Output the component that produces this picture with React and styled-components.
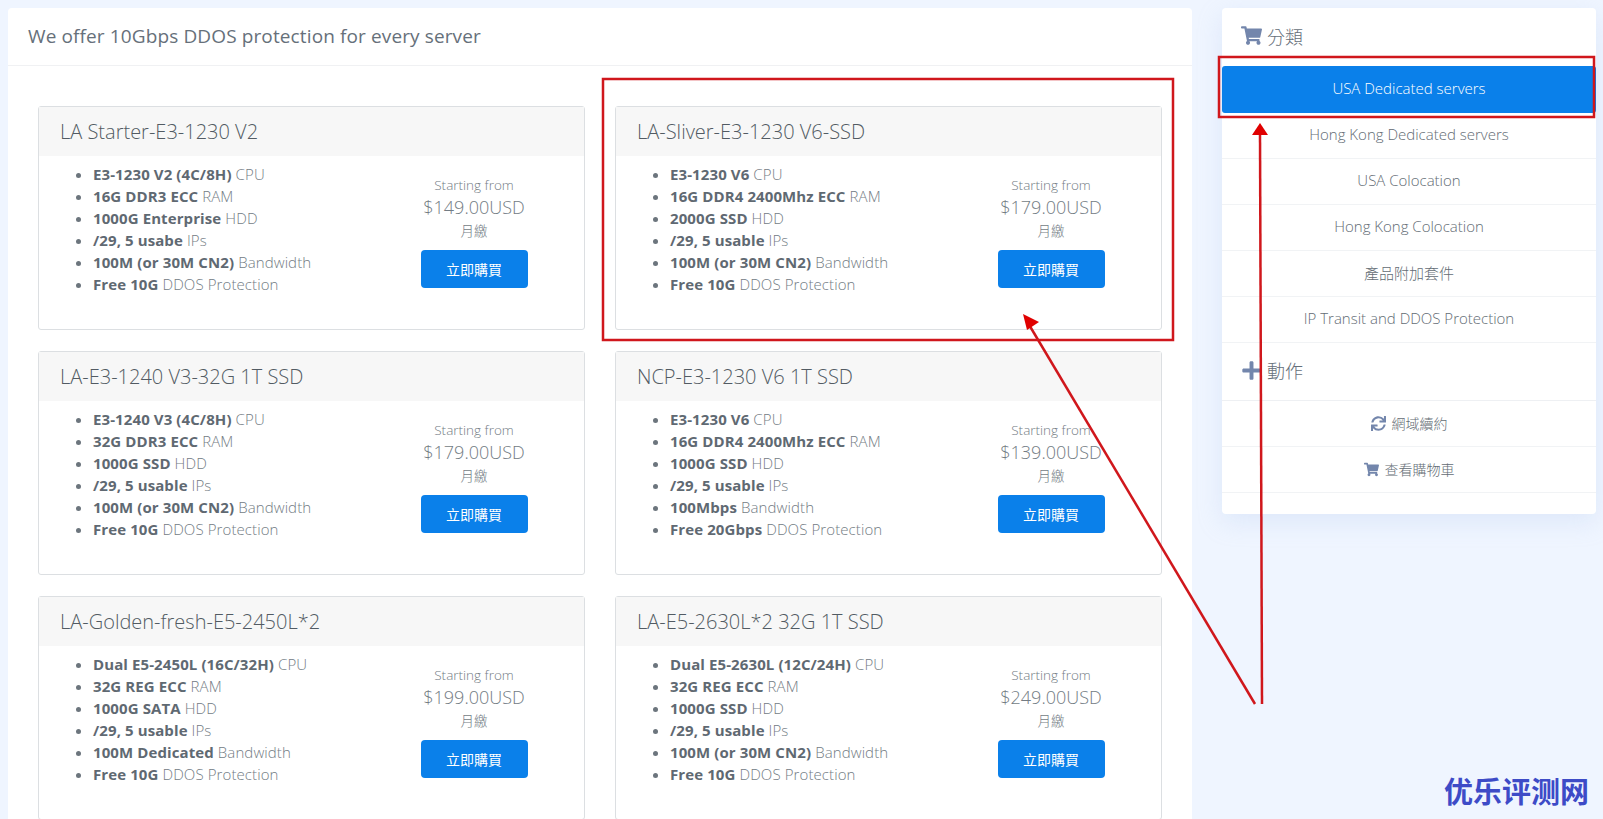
import React from "react";
import styled, { createGlobalStyle } from "styled-components";
import { FaShoppingCart, FaPlus, FaSync } from "react-icons/fa";

const plans = [
  {
    title: "LA Starter-E3-1230 V2",
    price: "$149.00USD",
    specs: [
      ["E3-1230 V2 (4C/8H)", "CPU"],
      ["16G DDR3 ECC", "RAM"],
      ["1000G Enterprise", "HDD"],
      ["/29, 5 usabe", "IPs"],
      ["100M (or 30M CN2)", "Bandwidth"],
      ["Free 10G", "DDOS Protection"],
    ],
  },
  {
    title: "LA-Sliver-E3-1230 V6-SSD",
    price: "$179.00USD",
    specs: [
      ["E3-1230 V6", "CPU"],
      ["16G DDR4 2400Mhz ECC", "RAM"],
      ["2000G SSD", "HDD"],
      ["/29, 5 usable", "IPs"],
      ["100M (or 30M CN2)", "Bandwidth"],
      ["Free 10G", "DDOS Protection"],
    ],
  },
  {
    title: "LA-E3-1240 V3-32G 1T SSD",
    price: "$179.00USD",
    specs: [
      ["E3-1240 V3 (4C/8H)", "CPU"],
      ["32G DDR3 ECC", "RAM"],
      ["1000G SSD", "HDD"],
      ["/29, 5 usable", "IPs"],
      ["100M (or 30M CN2)", "Bandwidth"],
      ["Free 10G", "DDOS Protection"],
    ],
  },
  {
    title: "NCP-E3-1230 V6 1T SSD",
    price: "$139.00USD",
    specs: [
      ["E3-1230 V6", "CPU"],
      ["16G DDR4 2400Mhz ECC", "RAM"],
      ["1000G SSD", "HDD"],
      ["/29, 5 usable", "IPs"],
      ["100Mbps", "Bandwidth"],
      ["Free 20Gbps", "DDOS Protection"],
    ],
  },
  {
    title: "LA-Golden-fresh-E5-2450L*2",
    price: "$199.00USD",
    specs: [
      ["Dual E5-2450L (16C/32H)", "CPU"],
      ["32G REG ECC", "RAM"],
      ["1000G SATA", "HDD"],
      ["/29, 5 usable", "IPs"],
      ["100M Dedicated", "Bandwidth"],
      ["Free 10G", "DDOS Protection"],
    ],
  },
  {
    title: "LA-E5-2630L*2 32G 1T SSD",
    price: "$249.00USD",
    specs: [
      ["Dual E5-2630L (12C/24H)", "CPU"],
      ["32G REG ECC", "RAM"],
      ["1000G SSD", "HDD"],
      ["/29, 5 usable", "IPs"],
      ["100M (or 30M CN2)", "Bandwidth"],
      ["Free 10G", "DDOS Protection"],
    ],
  },
];

const categories = [
  "USA Dedicated servers",
  "Hong Kong Dedicated servers",
  "USA Colocation",
  "Hong Kong Colocation",
  "產品附加套件",
  "IP Transit and DDOS Protection",
];

const GlobalStyle = createGlobalStyle`
  html, body {
    margin: 0;
    height: 100%;
    overflow: hidden;
    background: #eff5ff;
  }
  body {
    font-family: "Open Sans", "Noto Sans CJK TC", sans-serif;
    color: #6c757d;
  }
`;

const Page = styled.div`
  position: relative;
  width: 1603px;
  height: 819px;
  overflow: hidden;
  display: flex;
  align-items: flex-start;
  gap: 30px;
  padding: 8px 0 0 8px;
  box-sizing: border-box;
`;

const MainPanel = styled.section`
  width: 1184px;
  flex: none;
  background: #fff;
  border-radius: 4px;
`;

const PanelHeader = styled.header`
  height: 58px;
  box-sizing: border-box;
  border-bottom: 1px solid #f0f1f3;
  padding: 0 20px 2px;
  display: flex;
  align-items: center;
  font-size: 19px;
  letter-spacing: 0.12px;
  color: #66707a;
`;

const PlanGrid = styled.div`
  display: grid;
  grid-template-columns: 547px 547px;
  column-gap: 30px;
  row-gap: 21px;
  padding: 40px 30px 30px;
`;

const PlanCard = styled.article`
  height: 224px;
  box-sizing: border-box;
  border: 1px solid #dcdfe2;
  border-radius: 3px;
  display: flex;
  flex-direction: column;
`;

const PlanTitle = styled.h3`
  margin: 0;
  height: 49px;
  flex: none;
  background: #f7f7f7;
  padding: 0 21px;
  display: flex;
  align-items: center;
  font-size: 20px;
  font-weight: 300;
  color: #525b63;
`;

const PlanBody = styled.div`
  display: flex;
  justify-content: space-between;
  padding: 7px 20px 0 0;
`;

const SpecList = styled.ul`
  margin: 0;
  padding: 0 0 0 54px;
  font-size: 15px;
  line-height: 22px;
  font-weight: 300;
  letter-spacing: 0.1px;
  color: #737c84;

  li::marker {
    color: #6c757d;
  }
`;

const SpecValue = styled.strong`
  font-weight: 700;
  color: #5f6972;
`;

const PriceBox = styled.div`
  width: 180px;
  padding-top: 11px;
  display: flex;
  flex-direction: column;
  align-items: center;
`;

const PriceNote = styled.span`
  font-size: 13.5px;
  line-height: 22px;
  font-weight: 300;
  color: #737c84;
`;

const PriceValue = styled.span`
  font-size: 18px;
  line-height: 22px;
  margin-bottom: 2px;
  font-weight: 300;
  color: #737c84;
`;

const BuyButton = styled.button`
  margin-top: 8px;
  width: 107px;
  height: 38px;
  border: 0;
  border-radius: 4px;
  background: #0a80ea;
  color: #fff;
  font: 400 14px "Noto Sans CJK TC", sans-serif;
`;

const SidePanel = styled.aside`
  width: 374px;
  flex: none;
  padding-bottom: 21px;
  background: #fff;
  border-radius: 4px;
  box-shadow: 0 8px 24px rgba(170, 195, 235, 0.25);
`;

const SideHeading = styled.h4`
  margin: 0;
  height: 58px;
  box-sizing: border-box;
  padding: 0 20px 3px 19px;
  display: flex;
  align-items: center;
  gap: 5px;
  font: 300 18px "Noto Sans CJK TC", sans-serif;
  color: #66707a;
  border-bottom: ${({ $ruled }) => ($ruled ? "1px solid #eef0f3" : "0")};

  svg {
    color: #7386ac;
    font-size: 21px;
  }
`;

const SideItem = styled.a`
  height: ${({ $active }) => ($active ? "47px" : "46px")};
  box-sizing: border-box;
  padding-bottom: 3px;
  display: flex;
  align-items: center;
  justify-content: center;
  font-size: 15px;
  font-weight: 300;
  color: ${({ $active }) => ($active ? "#fff" : "#636c74")};
  background: ${({ $active }) => ($active ? "#0a80ea" : "#fff")};
  border-radius: ${({ $active }) => ($active ? "3px" : "0")};
  border-bottom: ${({ $active }) => ($active ? "0" : "1px solid #f1f3f5")};
`;

const ActionItem = styled(SideItem)`
  padding-bottom: 1px;
  gap: 6px;
  font-size: 14px;

  svg {
    color: #7386ac;
    font-size: 15px;
  }
`;

const Annotations = styled.svg`
  position: absolute;
  inset: 0;
  pointer-events: none;
`;

const Watermark = styled.span`
  position: absolute;
  left: 1444px;
  top: 770px;
  font: 700 29px/40px "Noto Sans CJK SC", sans-serif;
  color: #3d4bc7;
`;

const Plan = ({ title, price, specs }) => (
  <PlanCard>
    <PlanTitle>{title}</PlanTitle>
    <PlanBody>
      <SpecList>
        {specs.map(([value, label]) => (
          <li key={label}>
            <SpecValue>{value}</SpecValue> {label}
          </li>
        ))}
      </SpecList>
      <PriceBox>
        <PriceNote>Starting from</PriceNote>
        <PriceValue>{price}</PriceValue>
        <PriceNote>月繳</PriceNote>
        <BuyButton>立即購買</BuyButton>
      </PriceBox>
    </PlanBody>
  </PlanCard>
);

const App = () => (
  <Page>
    <GlobalStyle />
    <MainPanel>
      <PanelHeader>We offer 10Gbps DDOS protection for every server</PanelHeader>
      <PlanGrid>
        {plans.map((plan) => (
          <Plan key={plan.title} {...plan} />
        ))}
      </PlanGrid>
    </MainPanel>
    <SidePanel>
      <SideHeading>
        <FaShoppingCart /> 分類
      </SideHeading>
      {categories.map((name, i) => (
        <SideItem key={name} $active={i === 0}>
          {name}
        </SideItem>
      ))}
      <SideHeading $ruled>
        <FaPlus /> 動作
      </SideHeading>
      <ActionItem>
        <FaSync /> 網域續約
      </ActionItem>
      <ActionItem>
        <FaShoppingCart /> 查看購物車
      </ActionItem>
    </SidePanel>
    <Annotations width="1603" height="819" viewBox="0 0 1603 819">
      <g fill="none" stroke="#d0171c" strokeWidth="2.5">
        <rect x="603" y="79" width="570" height="261" />
        <rect x="1219" y="57" width="375" height="60" />
        <line x1="1255" y1="704" x2="1028" y2="323" />
        <line x1="1262" y1="704" x2="1260" y2="133" />
      </g>
      <polygon points="1023,314 1039,322 1027,330" fill="#e00000" />
      <polygon points="1260,123 1252,135 1268,135" fill="#e00000" />
    </Annotations>
    <Watermark>优乐评测网</Watermark>
  </Page>
);

export default App;
